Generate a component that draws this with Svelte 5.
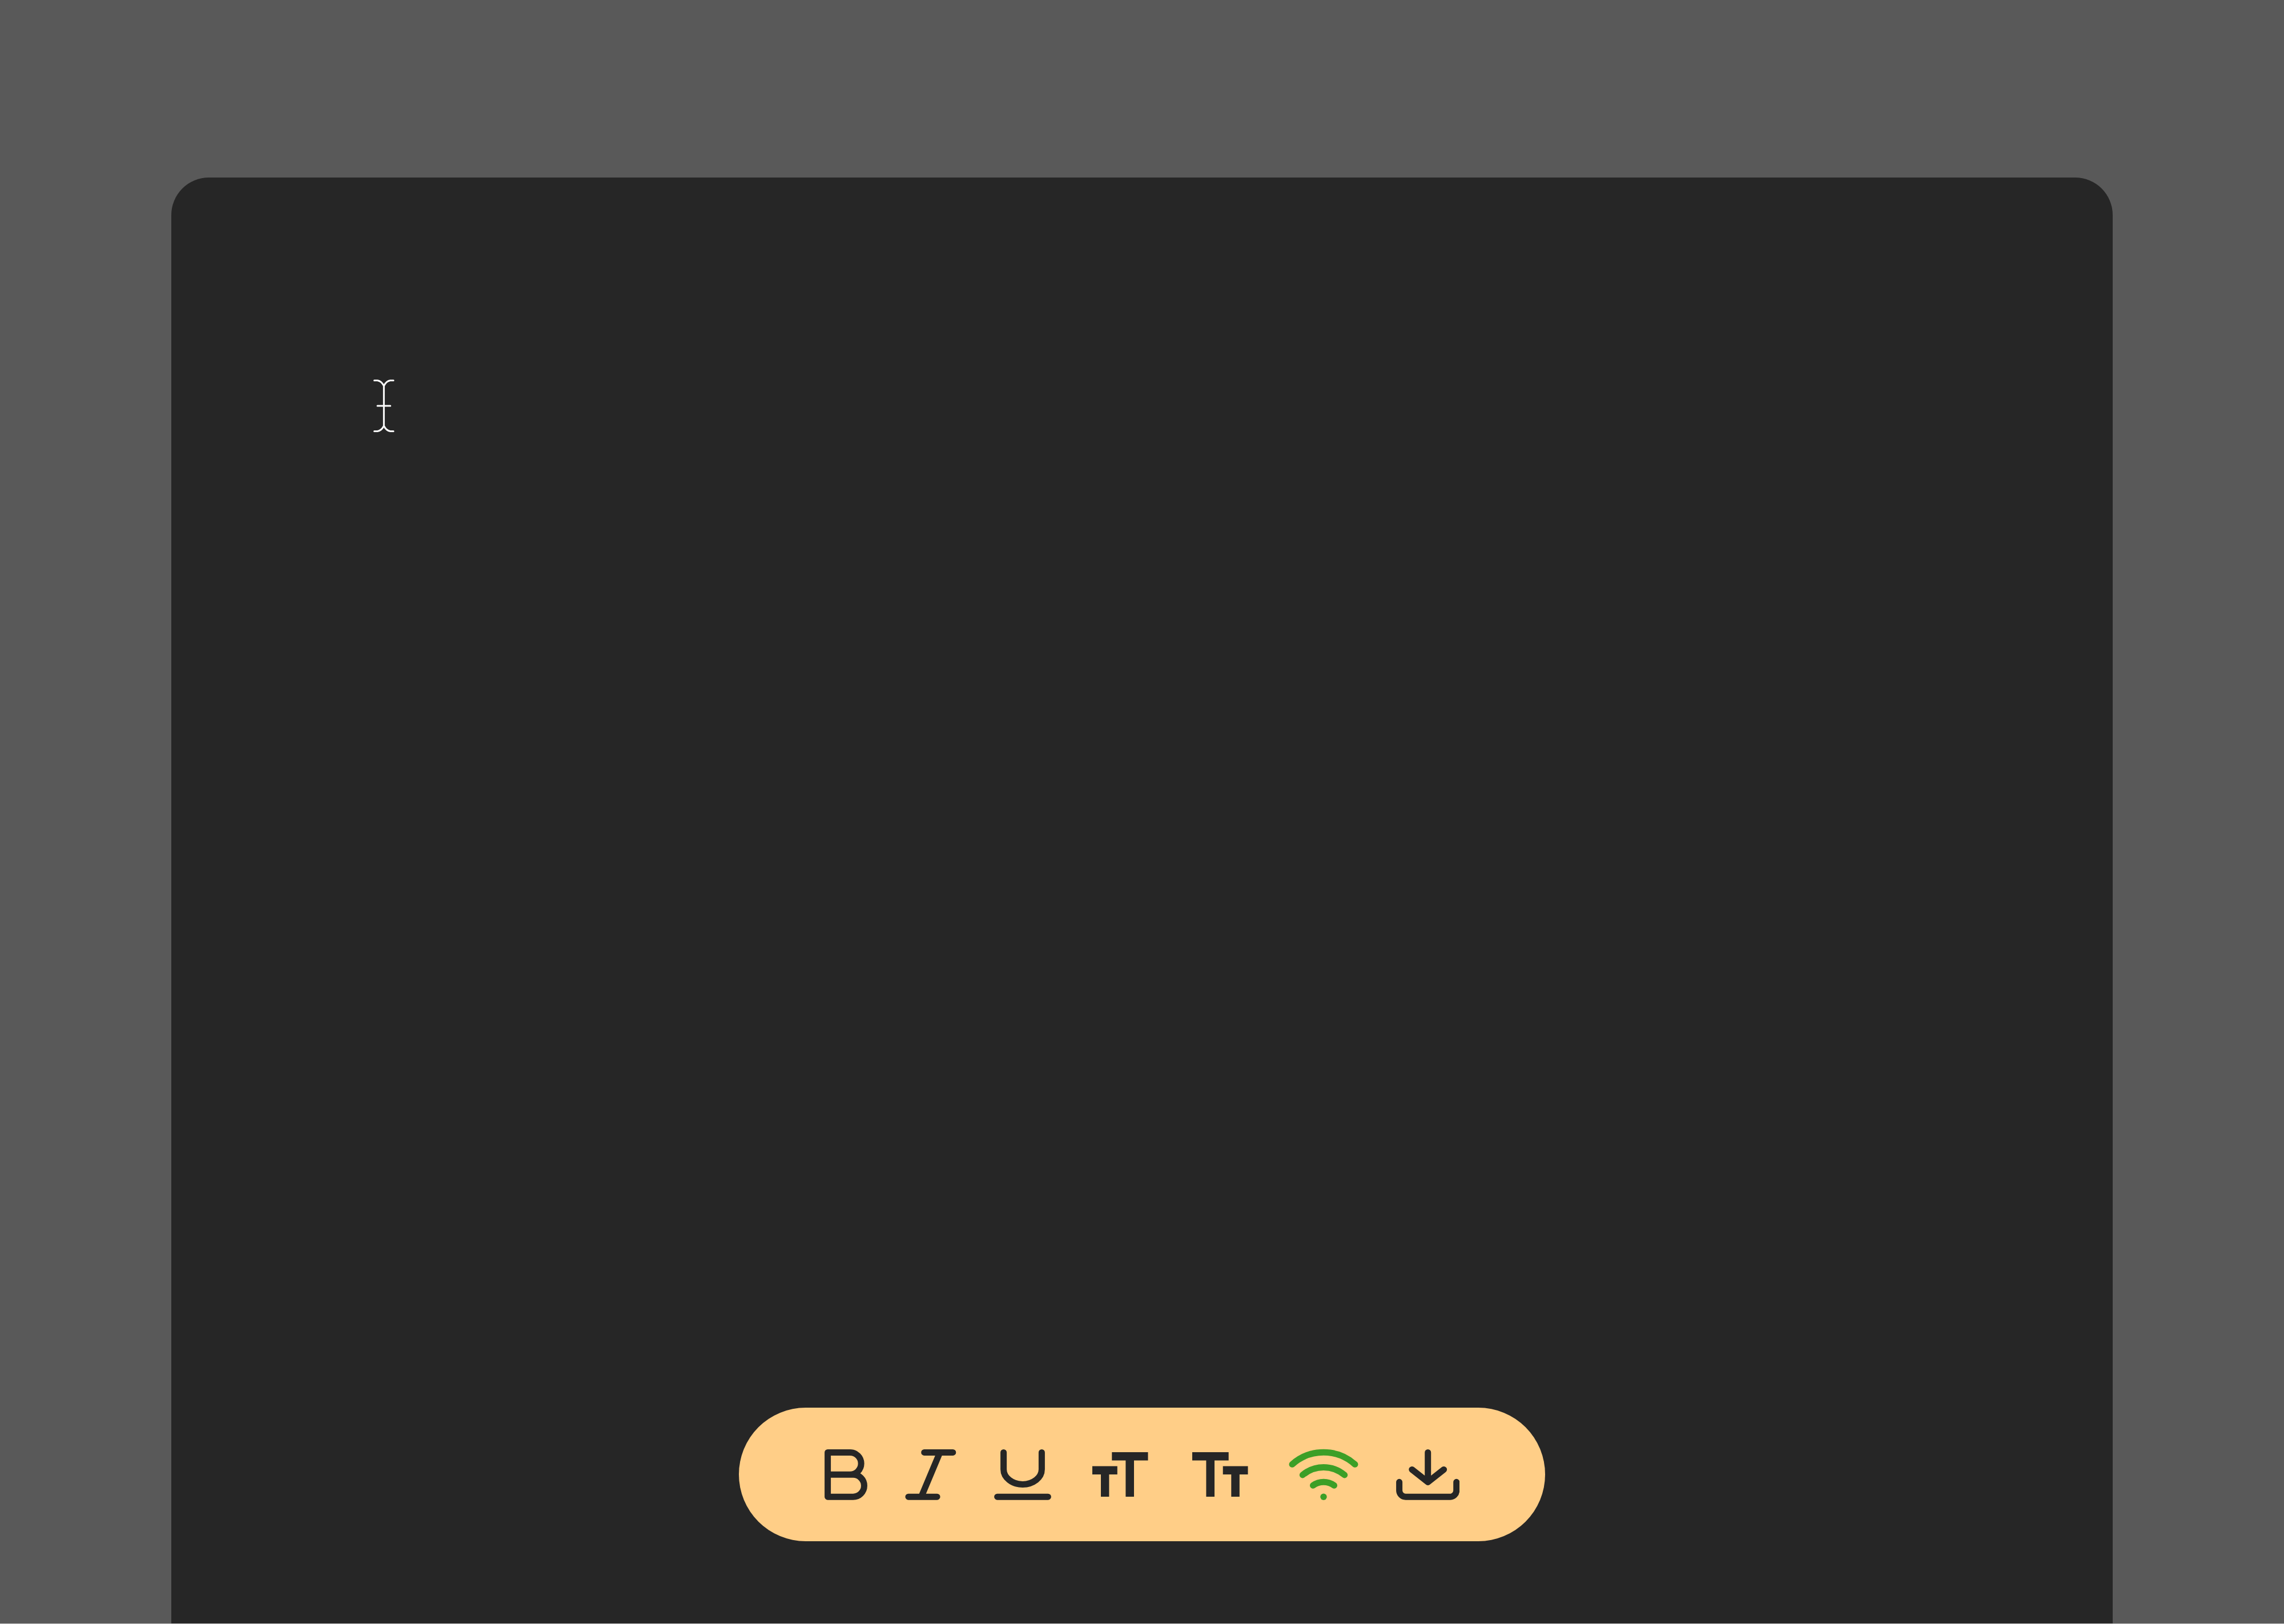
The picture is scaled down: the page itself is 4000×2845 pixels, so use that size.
<script>
  const tools = [
    { id: 'bold', label: 'Bold', width: 77 },
    { id: 'italic', label: 'Italic', width: 92 },
    { id: 'underline', label: 'Underline', width: 104 },
    { id: 'larger', label: 'Increase text size', width: 111 },
    { id: 'smaller', label: 'Decrease text size', width: 109 },
    { id: 'online', label: 'Connection status', width: 124 },
    { id: 'download', label: 'Download', width: 111 }
  ];
</script>

<div class="page">
  <main class="sheet">
    <svg class="caret" viewBox="0 0 38 94" aria-hidden="true">
      <path d="M2.5 2.5H8Q15 3.5 19.3 12Q23.5 3.5 30.5 2.5H36M19.3 12V82M8 47H30.6M2.5 91.5H8Q15 90.5 19.3 82Q23.5 90.5 30.5 91.5H36" />
    </svg>

    <div class="toolbar" role="toolbar" aria-label="Formatting">
      {#each tools as tool (tool.id)}
        <button type="button" class={tool.id} aria-label={tool.label}>
          <svg width={tool.width} height="90" viewBox="0 0 {tool.width} 90" aria-hidden="true">
            {#if tool.id === 'bold'}
              <path d="M5.6 6.4H44.7a19.45 19.45 0 0 1 0 38.9H5.6ZM5.6 45.3H50a19.45 19.45 0 0 1 0 38.9H5.6Z" />
            {:else if tool.id === 'italic'}
              <path d="M33.7 6.4H83.8M5.9 84.2H56.1M61.1 6.4L28.5 84.2" />
            {:else if tool.id === 'underline'}
              <path d="M16.6 6.4V36C16.6 50.5 31.6 62.4 50 62.4S83.4 50.5 83.4 36V6.4M5.6 84.2H94.4" />
            {:else if tool.id === 'larger'}
              <path class="solid" d="M38.3 6H101.5V20.6H77V84H62.4V20.6H38.3ZM4 30.5H47.8V45H33.4V84H19V45H4Z" />
            {:else if tool.id === 'smaller'}
              <path class="solid" d="M4 6H67.7V20.6H43V84H28.4V20.6H4ZM57.7 30.5H101.5V45H86.8V84H72.3V45H57.7Z" />
            {:else if tool.id === 'online'}
              <path d="M6 27.3A82.5 82.5 0 0 1 116 27.3M24.3 45.9A56.6 56.6 0 0 1 97.7 45.9M42.5 64.3A31.5 31.5 0 0 1 79.5 64.3" />
              <circle class="solid" cx="61" cy="84.2" r="5.7" />
            {:else}
              <path d="M55.7 6.4V58.3M27.8 36.4L55.7 58.3L83.6 36.4M5.6 58.3V73.1A11.1 11.1 0 0 0 16.7 84.2H94.6A11.1 11.1 0 0 0 105.7 73.1V58.3" />
            {/if}
          </svg>
        </button>
      {/each}
    </div>
  </main>
</div>

<style>
  :global(body) {
    margin: 0;
    background: #595959;
  }

  .page {
    box-sizing: border-box;
    display: flex;
    min-height: 100vh;
    padding: 311px 7.5% 0;
    background: #595959;
    border-bottom: 1px solid #c4c4c4;
    font-family: "Liberation Sans", Arial, sans-serif;
  }

  .sheet {
    box-sizing: border-box;
    flex: 1;
    display: flex;
    flex-direction: column;
    padding: 353px 353px 144px;
    border-radius: 66px 66px 0 0;
    background: #262626;
  }

  .caret {
    width: 38px;
    height: 94px;
    fill: none;
    stroke: #fff;
    stroke-width: 3;
    stroke-linecap: round;
    stroke-linejoin: round;
  }

  .toolbar {
    display: flex;
    align-items: center;
    align-self: center;
    gap: 64px;
    margin-top: auto;
    padding: 72px 150px;
    border-radius: 117px;
    background: #ffce87;
  }

  button {
    display: flex;
    padding: 0;
    border: 0;
    background: none;
    color: #262626;
    cursor: pointer;
  }

  .online {
    color: #3c9f27;
  }

  button svg {
    display: block;
    fill: none;
    stroke: currentColor;
    stroke-width: 11;
    stroke-linecap: round;
    stroke-linejoin: round;
  }

  button .solid {
    fill: currentColor;
    stroke: none;
  }
</style>
